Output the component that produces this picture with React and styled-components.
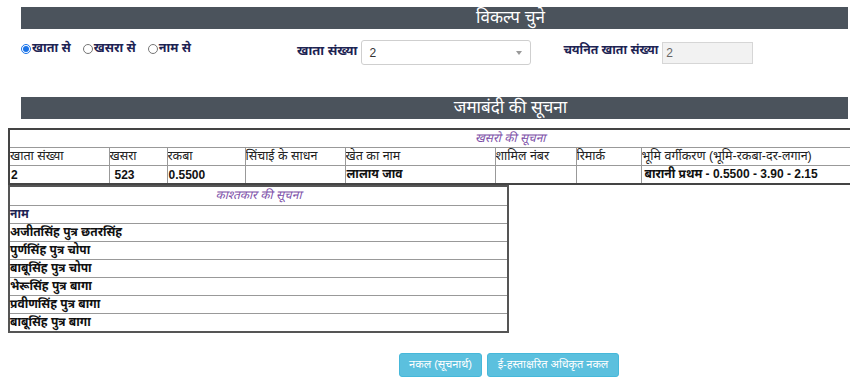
import React from "react";
import styled, { createGlobalStyle } from "styled-components";

const Global = createGlobalStyle`
  html, body { margin: 0; padding: 0; background: #fff; }
  body {
    font-family: "Liberation Sans", Arial, "Noto Sans Devanagari", "Lohit Devanagari", "Noto Sans", sans-serif;
    color: #111;
    overflow: hidden;
  }
`;

const Page = styled.div`
  width: 852px;
  height: 384px;
  overflow: hidden;
  padding-top: 7px;
  box-sizing: border-box;
`;

const SectionBar = styled.div`
  margin-left: 21px;
  width: 827px;
  height: 22px;
  background: #4b535c;
  color: #fff;
  font-size: 17px;
  line-height: 22px;
  text-align: center;
  padding-left: 152px;
  box-sizing: border-box;
  margin-top: ${(p) => p.$top || 0}px;
`;

const OptionRow = styled.div`
  display: flex;
  align-items: center;
  height: 26px;
  margin-top: 9px;
  margin-left: 21px;
`;

const RadioGroup = styled.div`
  display: flex;
  align-items: center;
  width: 276px;
  gap: 12px;
`;

const RadioLabel = styled.label`
  display: flex;
  align-items: center;
  font-size: 12.5px;
  font-weight: bold;
  color: #1d2353;
  margin-top: -5px;
`;

const Radio = styled.input.attrs({ type: "radio" })`
  width: 10px;
  height: 10px;
  margin: 0 1px 0 0;
  accent-color: #1a73e8;
`;

const FieldLabel = styled.span`
  font-size: ${(p) => p.$size || 13}px;
  font-weight: bold;
  color: #1d2353;
  margin-right: 4px;
`;

const SelectBox = styled.div`
  width: 170px;
  height: 25px;
  box-sizing: border-box;
  border: 1px solid #cfcfcf;
  border-radius: 3px;
  display: flex;
  align-items: center;
  justify-content: space-between;
  padding: 0 8px 0 7px;
  font-size: 12px;
  color: #333;
  margin-top: 3px;
`;

const Caret = styled.span`
  width: 0;
  height: 0;
  border-left: 3px solid transparent;
  border-right: 3px solid transparent;
  border-top: 4px solid #999;
`;

const SelectedGroup = styled.div`
  display: flex;
  align-items: center;
  margin-left: 32px;
`;

const ReadInput = styled.div`
  width: 91px;
  height: 22px;
  box-sizing: border-box;
  border: 1px solid #d6d6d6;
  background: #f2f2f2;
  font-size: 12px;
  color: #666;
  padding-left: 3px;
  display: flex;
  align-items: center;
  margin-top: 3px;
`;

const KhasraTable = styled.table`
  margin-top: 9px;
  margin-left: 8px;
  width: 841px;
  border-collapse: collapse;
  border-top: 2px solid #444;
  border-left: 2px solid #444;
  border-bottom: 2px solid #444;
  table-layout: fixed;
  font-size: 12.5px;
`;

const CaptionCell = styled.td`
  height: 17px;
  padding: 0;
  font-style: italic;
  color: #7d4fa8;
  font-size: 12px;
  text-align: ${(p) => p.$align || "left"};
  padding-left: ${(p) => p.$pad || 0}px;
  border-bottom: 1px solid #999;
`;

const HeadCell = styled.td`
  height: 17px;
  padding: 0;
  border: 1px solid #999;
  border-top: none;
  color: #222;
  white-space: nowrap;
  overflow: hidden;
  &:first-child { border-left: none; }
  &:last-child { border-right: none; }
`;

const DataCell = styled(HeadCell)`
  font-weight: bold;
  color: #111;
  border-bottom: none;
  font-size: 12px;
  padding-left: ${(p) => p.$pad ?? 1}px;
`;

const OwnerTable = styled.table`
  margin-left: 8px;
  width: 501px;
  border-collapse: collapse;
  border: 2px solid #555;
  font-size: 12px;
`;

const OwnerCell = styled.td`
  height: 17px;
  padding: 0;
  border-top: 1px solid #999;
  font-weight: bold;
  color: ${(p) => (p.$head ? "#1d2353" : "#111")};
`;

const OwnerCaption = styled.td`
  height: 18px;
  padding: 0;
  text-align: center;
  font-style: italic;
  color: #7d4fa8;
`;

const Buttons = styled.div`
  display: flex;
  gap: 5px;
  margin-left: 399px;
  margin-top: 20px;
`;

const InfoButton = styled.button`
  height: 24px;
  padding: 0 8px;
  background: #5bc0de;
  border: 1px solid #46b8da;
  border-radius: 3px;
  color: #fff;
  font-family: inherit;
  font-size: 11px;
  width: ${(p) => p.$w}px;
`;

const widths = [100, 58, 78, 100, 150, 81, 65, 209];
const heads = [
  "खाता संख्या",
  "खसरा",
  "रकबा",
  "सिंचाई के साधन",
  "खेत का नाम",
  "शामिल नंबर",
  "रिमार्क",
  "भूमि वर्गीकरण (भूमि-रकबा-दर-लगान)",
];
const row = [
  { t: "2" },
  { t: "523", pad: 5 },
  { t: "0.5500" },
  { t: "" },
  { t: "लालाय जाव" },
  { t: "" },
  { t: "" },
  { t: "बारानी प्रथम - 0.5500 - 3.90 - 2.15", pad: 3 },
];
const owners = [
  "अजीतसिंह पुत्र छतरसिंह",
  "पुर्णसिंह पुत्र चोपा",
  "बाबूसिंह पुत्र चोपा",
  "भेरूसिंह पुत्र बागा",
  "प्रवीणसिंह पुत्र बागा",
  "बाबूसिंह पुत्र बागा",
];

export default function App() {
  return (
    <Page>
      <Global />
      <SectionBar>विकल्प चुने</SectionBar>
      <OptionRow>
        <RadioGroup>
          <RadioLabel>
            <Radio name="opt" defaultChecked />
            खाता से
          </RadioLabel>
          <RadioLabel>
            <Radio name="opt" />
            खसरा से
          </RadioLabel>
          <RadioLabel>
            <Radio name="opt" />
            नाम से
          </RadioLabel>
        </RadioGroup>
        <FieldLabel>खाता संख्या</FieldLabel>
        <SelectBox>
          <span>2</span>
          <Caret />
        </SelectBox>
        <SelectedGroup>
          <FieldLabel $size={12.2}>चयनित खाता संख्या</FieldLabel>
          <ReadInput>2</ReadInput>
        </SelectedGroup>
      </OptionRow>
      <SectionBar $top={33}>जमाबंदी की सूचना</SectionBar>
      <KhasraTable>
        <colgroup>
          {widths.map((w, i) => (
            <col key={i} style={{ width: w }} />
          ))}
        </colgroup>
        <tbody>
          <tr>
            <CaptionCell colSpan={8} $pad={465}>
              खसरो की सूचना
            </CaptionCell>
          </tr>
          <tr>
            {heads.map((h, i) => (
              <HeadCell key={i}>{h}</HeadCell>
            ))}
          </tr>
          <tr>
            {row.map((c, i) => (
              <DataCell key={i} $pad={c.pad}>
                {c.t}
              </DataCell>
            ))}
          </tr>
        </tbody>
      </KhasraTable>
      <OwnerTable>
        <tbody>
          <tr>
            <OwnerCaption>काश्तकार की सूचना</OwnerCaption>
          </tr>
          <tr>
            <OwnerCell $head>नाम</OwnerCell>
          </tr>
          {owners.map((o, i) => (
            <tr key={i}>
              <OwnerCell>{o}</OwnerCell>
            </tr>
          ))}
        </tbody>
      </OwnerTable>
      <Buttons>
        <InfoButton $w={83}>नकल (सूचनार्थ)</InfoButton>
        <InfoButton $w={132}>ई-हस्ताक्षरित अधिकृत नकल</InfoButton>
      </Buttons>
    </Page>
  );
}
